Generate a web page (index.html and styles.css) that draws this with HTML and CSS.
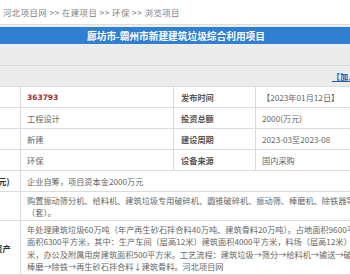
FILE: index.html
```html
<!DOCTYPE html>
<html lang="zh-CN">
<head>
    <meta charset="UTF-8">
    <meta name="viewport" content="width=device-width, initial-scale=1.0">
    <title>廊坊市-霸州市新建建筑垃圾综合利用项目</title>
    <link rel="stylesheet" href="styles.css">
</head>
<body>
    <div class="crumbs">河北项目网 &gt;&gt; 在建项目 &gt;&gt; 环保 &gt;&gt; 浏览项目</div>
    <div class="page">
        <div class="title-bar">
            <h1>廊坊市-霸州市新建建筑垃圾综合利用项目</h1>
        </div>
        <div class="band"></div>
        <div class="band tools"><a href="#">【加入收藏】</a></div>
        <div class="info">
            <div class="side">项目编号</div>
            <div class="value code">363793</div>
            <div class="label">发布时间</div>
            <div class="value">【2023年01月12日】</div>

            <div class="side">项目类型</div>
            <div class="value">工程设计</div>
            <div class="label">投资总额</div>
            <div class="value">2000(万元)</div>

            <div class="side">建设性质</div>
            <div class="value">新建</div>
            <div class="label">建设周期</div>
            <div class="value">2023-03至2023-08</div>

            <div class="side">所属行业</div>
            <div class="value">环保</div>
            <div class="label">设备来源</div>
            <div class="value">国内采购</div>

            <div class="side">资金来源(万元)</div>
            <div class="value wide">企业自筹，项目资本金2000万元</div>

            <div class="side">主要设备</div>
            <div class="value wide multi">购置振动筛分机、给料机、建筑垃圾专用破碎机、圆锥破碎机、振动筛、棒磨机、除铁器等设备<br>（套）。</div>

            <div class="side">建设规模及资产</div>
            <div class="value wide multi">年处理建筑垃圾60万吨（年产再生砂石拌合料40万吨、建筑骨料20万吨）。占地面积9600平方米，总建筑<br>面积6300平方米，其中：生产车间（层高12米）建筑面积4000平方米，料场（层高12米）建筑面积1800平方<br>米，办公及附属用房建筑面积500平方米。工艺流程：建筑垃圾→筛分→给料机→输送→破碎→筛分→<br>棒磨→除铁→再生砂石拌合料↓建筑骨料。河北项目网</div>
        </div>
    </div>
</body>
</html>
```

FILE: styles.css
```css
body {
    margin: 0;
    background: #efefef;
    font-family: "Noto Sans CJK SC", "Noto Sans", sans-serif;
    font-size: 8.2px;
    color: #666;
    overflow: hidden;
}
.crumbs {
    height: 24px;
    line-height: 24px;
    padding-left: 3px;
    margin-bottom: 2px;
    background: #fff;
    border-bottom: 1px solid #dcdcdc;
    color: #808080;
    font-size: 8.4px;
    letter-spacing: 0.45px;
    white-space: nowrap;
}
.page {
    width: 466px;
    margin-left: -57px;
}
.title-bar {
    height: 17px;
    background: #2f7fd2;
    display: flex;
    align-items: center;
    justify-content: center;
}
.title-bar h1 {
    margin: 0;
    font-size: 9.7px;
    color: #fff;
    font-weight: bold;
    white-space: nowrap;
}
.band {
    height: 21px;
    background: #ececec;
    border-bottom: 1px solid #dcdcdc;
}
.tools {
    height: 20px;
    border-bottom: none;
    display: flex;
    align-items: center;
    justify-content: flex-end;
    padding-right: 28px;
}
.tools a {
    color: #1a5db5;
    font-weight: bold;
    font-size: 8.2px;
    white-space: nowrap;
}
.info {
    display: grid;
    grid-template-columns: 76px 152px 81px 1fr;
    gap: 1px;
    background: #dcdcdc;
    border: 1px solid #dcdcdc;
}
.info > div {
    background: #fff;
    min-height: 20px;
    display: flex;
    align-items: center;
    white-space: nowrap;
    overflow: hidden;
}
.side {
    justify-content: center;
    font-weight: bold;
    color: #333;
}
.label {
    padding-left: 7px;
    font-weight: bold;
    color: #555;
}
.value {
    padding-left: 6px;
}
.wide {
    grid-column: span 3;
}
.multi {
    display: block !important;
    line-height: 12.5px;
    padding-top: 1.5px;
    padding-bottom: 1.5px;
}
.code {
    font-family: "DejaVu Sans", sans-serif;
    font-weight: bold;
    font-size: 7.5px;
    color: #9b2d34;
}
```
